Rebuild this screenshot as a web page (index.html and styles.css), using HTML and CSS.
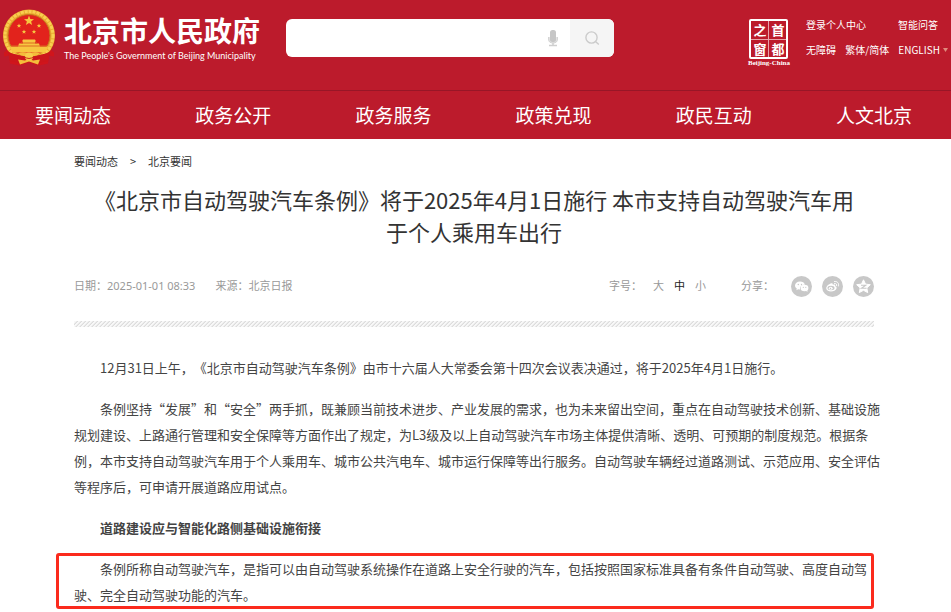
FILE: index.html
```html
<!DOCTYPE html>
<html lang="zh-CN">
<head>
<meta charset="utf-8">
<meta name="viewport" content="width=device-width, initial-scale=1">
<title>北京市人民政府</title>
<link rel="stylesheet" href="styles.css">
</head>
<body>
<header class="header">
  <div class="topbar">
    <a class="brand" href="#">
      <svg class="emblem" viewBox="0 0 54 56" aria-hidden="true">
        <path d="M8 38 L2 43 L2 47 L7 46 L8 54 L17 56 L27 53 L37 56 L46 54 L47 46 L52 47 L52 43 L46 38Z" fill="#d0151c"/>
        <circle cx="27" cy="26" r="26" fill="#eaa930"/>
        <circle cx="27" cy="26" r="24" fill="none" stroke="#f8cf50" stroke-width="3" stroke-dasharray="3 1"/>
        <circle cx="27" cy="26" r="21" fill="#e2231c" stroke="#c5791f"/>
        <g fill="#f7c640">
          <path d="M27 6l1.300 3.500 3.700.200-2.900 2.300 1 3.600-3.100-2-3.100 2 1-3.600-2.900-2.300 3.700-.200z"/>
          <path d="M17 14l.6 1.500 1.600.1-1.200 1 .4 1.600-1.400-.9-1.400.9.4-1.600-1.200-1 1.600-.1z"/>
          <path d="M37 14l.6 1.500 1.600.1-1.200 1 .4 1.600-1.400-.9-1.400.9.4-1.600-1.200-1 1.600-.1z"/>
          <path d="M22 20l.6 1.500 1.600.1-1.200 1 .4 1.600-1.400-.9-1.400.9.4-1.600-1.200-1 1.600-.1z"/>
          <path d="M32 20l.6 1.500 1.600.1-1.200 1 .4 1.600-1.400-.9-1.400.9.4-1.600-1.200-1 1.600-.1z"/>
          <path d="M21 30h12l1 2h-1v2h4l1 3h8q-1 4-3 6H11q-2-2-3-6h8l1-3h4v-2h-1z"/>
        </g>
        <path d="M9 36.500h36M19 33.500h16" stroke="#dd6b22" stroke-width="1"/>
        <path d="M6 42c7 4 13 3 21 6 8-3 14-2 21-6l-2 10c-5 0-9 1-11 3-3 0-5-2-8-3-3 1-5 3-8 3-2-2-6-3-11-3z" fill="#cc161b"/>
        <path d="M16 44q6-3 11 1 5-4 11-1-4 4-11 2-7 2-11-2zM16 50l7 1 4-2 4 2 7-1-2 5-9-3-9 3z" fill="#f4bd3b"/>
        <circle cx="27" cy="47" r="4" fill="#f8cd4c"/><path d="M22 47q5 4 10 0" fill="none" stroke="#cc3018"/>
      </svg>
      <span class="brand-text">
        <span class="brand-cn">北京市人民政府</span>
        <span class="brand-en">The People's Government of Beijing Municipality</span>
      </span>
    </a>
    <form class="search" role="search">
      <input class="search-input" type="text" aria-label="搜索">
      <button class="mic" type="button" aria-label="语音">
        <svg width="12" height="18" viewBox="0 0 12 18" aria-hidden="true"><path d="M1.500 8v2q0 4 4.500 4t4.500-4V8" fill="#e2e2e2" stroke="#d4d4d4"/><rect x="3" y="1" width="6" height="12" rx="2.500" fill="#c6c6c6"/><path d="M6 14v2M2 16.500h8" fill="none" stroke="#cfcfcf" stroke-width="1.500"/></svg>
      </button>
      <button class="search-btn" type="button" aria-label="搜索">
        <svg width="16" height="16" viewBox="0 0 16 16" fill="none" stroke="#cbcbcb" stroke-width="1.400" aria-hidden="true"><circle cx="7.500" cy="7.500" r="5.600"/><path d="M11.500 11.500l3.300 3"/></svg>
      </button>
    </form>
    <div class="tools">
      <a class="capital" href="#">
        <span class="seal"><span>之</span><span>首</span><span>窗</span><span>都</span></span>
        <span class="capital-en">Beijing-China</span>
      </a>
      <div class="links">
        <div class="links-row"><a href="#">登录个人中心</a><a class="faq" href="#">智能问答</a></div>
        <div class="links-row"><a href="#">无障碍</a><a href="#">繁体/简体</a><a class="lang" href="#">ENGLISH<svg width="5" height="4" viewBox="0 0 5 4" aria-hidden="true"><path d="M0 0h5L2.500 4z" fill="#e08a7c"/></svg></a></div>
      </div>
    </div>
  </div>
  <nav class="nav">
    <a href="#">要闻动态</a><a href="#">政务公开</a><a href="#">政务服务</a><a href="#">政策兑现</a><a href="#">政民互动</a><a href="#">人文北京</a>
  </nav>
</header>
<main class="page">
  <nav class="crumbs"><a href="#">要闻动态</a><span>&gt;</span><a href="#">北京要闻</a></nav>
  <h1 class="title">《北京市自动驾驶汽车条例》将于2025年4月1日施行 本市支持自动驾驶汽车用于个人乘用车出行</h1>
  <div class="meta">
    <span>日期：2025-01-01 08:33</span>
    <span class="source">来源：北京日报</span>
    <div class="sizes"><span>字号：</span><button type="button">大</button><button class="on" type="button">中</button><button type="button">小</button></div>
    <div class="share">
      <span>分享：</span>
      <a href="#" aria-label="微信"><svg viewBox="0 0 21 21" aria-hidden="true"><circle cx="10.500" cy="10.500" r="10.500" fill="#c8c8c8"/><path d="M9 5.500c-3 0-5 1.800-5 4 0 1.300.7 2.300 1.800 3l-.5 1.700 2-1c.6.200 1.200.200 1.800.200-.5-3 1.600-4.700 4.800-4.700C13.400 6.700 11.500 5.500 9 5.500z" fill="#fff"/><ellipse cx="13.500" cy="12" rx="3.900" ry="3.200" fill="#fff"/><path d="M14.500 14.500l2 1.500-.4-2z" fill="#fff"/><g fill="#c8c8c8"><circle cx="7.300" cy="8.500" r=".7"/><circle cx="10.500" cy="8.500" r=".7"/><circle cx="12.300" cy="11.300" r=".6"/><circle cx="14.800" cy="11.300" r=".6"/></g></svg></a>
      <a href="#" aria-label="微博"><svg viewBox="0 0 21 21" aria-hidden="true"><circle cx="10.500" cy="10.500" r="10.500" fill="#c8c8c8"/><path d="M9.500 7.200c1.200-.3 1.600.5 1.200 1.600 1.900-.6 3 0 2.500 1.500 1.200.4 1.600 1.100 1.300 2.100-.6 2-3 3-5.500 3-2.700 0-4.800-1.200-4.800-3.100 0-2.200 3-4.700 5.300-5.100z" fill="#fff"/><ellipse cx="9" cy="12" rx="3.500" ry="2.200" fill="#c8c8c8"/><ellipse cx="8.700" cy="12.200" rx="1.900" ry="1.500" fill="#fff"/><circle cx="8.500" cy="12.500" r=".7" fill="#c8c8c8"/><path d="M12.500 5.500c2.900-.4 4.700 1.700 4 4.500M12.500 7.500c1.700-.2 2.500.8 2.200 2.200" fill="none" stroke="#fff" stroke-linecap="round"/></svg></a>
      <a href="#" aria-label="QQ空间"><svg viewBox="0 0 21 21" aria-hidden="true"><circle cx="10.500" cy="10.500" r="10.500" fill="#c8c8c8"/><path d="M10.500 3.800l2 4.300 4.800.6-3.500 3.200.9 4.700-4.200-2.300-4.200 2.300.9-4.700-3.500-3.200 4.800-.6z" fill="#fff" stroke="#fff" stroke-linejoin="round" stroke-width="1"/><path d="M8 9.200h4.700L8.500 12.300h5" fill="none" stroke="#c8c8c8" stroke-width="1.100"/></svg></a>
    </div>
  </div>
  <div class="stripe"></div>
  <article class="article">
    <p>12月31日上午，《北京市自动驾驶汽车条例》由市十六届人大常委会第十四次会议表决通过，将于2025年4月1日施行。</p>
    <p>条例坚持“发展”和“安全”两手抓，既兼顾当前技术进步、产业发展的需求，也为未来留出空间，重点在自动驾驶技术创新、基础设施规划建设、上路通行管理和安全保障等方面作出了规定，为L3级及以上自动驾驶汽车市场主体提供清晰、透明、可预期的制度规范。根据条例，本市支持自动驾驶汽车用于个人乘用车、城市公共汽电车、城市运行保障等出行服务。自动驾驶车辆经过道路测试、示范应用、安全评估等程序后，可申请开展道路应用试点。</p>
    <p><strong>道路建设应与智能化路侧基础设施衔接</strong></p>
    <p class="marked">条例所称自动驾驶汽车，是指可以由自动驾驶系统操作在道路上安全行驶的汽车，包括按照国家标准具备有条件自动驾驶、高度自动驾驶、完全自动驾驶功能的汽车。</p>
  </article>
</main>
</body>
</html>
```
FILE: styles.css
```css
* { box-sizing: border-box; }

body {
  margin: 0;
  background: #fff;
  color: #333;
  font-family: "Noto Sans CJK SC", "Noto Sans", sans-serif;
  font-size: 11px;
  line-height: 16px;
  text-spacing-trim: space-all;
}

a { color: inherit; text-decoration: none; }

button {
  padding: 0;
  border: 0;
  background: none;
  color: inherit;
  font: inherit;
}

svg { display: block; }

/* Header */
.header { background: #bc1b2c; color: #fff; }

.topbar {
  display: flex;
  align-items: flex-start;
  height: 90px;
  padding: 9px 3px 0 2px;
}

.brand { display: flex; gap: 8px; width: 284px; flex: none; }
.emblem { width: 54px; height: 57px; }
.brand-text { display: flex; flex-direction: column; padding-top: 4px; white-space: nowrap; }
.brand-cn { font-size: 28px; font-weight: 700; line-height: 34px; }
.brand-en { font-family: Lato, "Open Sans", sans-serif; font-size: 9px; line-height: 18px; }

.search {
  display: flex;
  align-items: center;
  width: 328px;
  height: 38px;
  margin-top: 10px;
  overflow: hidden;
  background: #fff;
  border-radius: 6px;
}
.search-input { flex: 1; min-width: 0; height: 100%; border: 0; outline: 0; padding: 0 12px; background: none; }
.mic { margin-right: 11px; }
.search-btn { display: grid; place-items: center; width: 44px; height: 100%; background: #f5f5f5; }

.tools { display: flex; gap: 16px; margin-left: auto; padding-top: 8px; white-space: nowrap; }
.capital { display: flex; flex-direction: column; align-items: center; padding-top: 2px; }
.seal {
  display: grid;
  grid-template-columns: 17px 17px;
  gap: 2px 1px;
  border: 2px solid #fff;
  border-radius: 2px;
  background: linear-gradient(#e9a3aa, #e9a3aa) center / 1px 100% no-repeat, linear-gradient(#e9a3aa, #e9a3aa) center / 100% 1px no-repeat;
  font-size: 13px;
  font-weight: 700;
  line-height: 17px;
  text-align: center;
}
.capital-en { font-family: "Liberation Serif", serif; font-size: 7px; font-weight: 700; line-height: 8px; }

.links { display: flex; flex-direction: column; gap: 9px; width: 142px; font-size: 10px; }
.links-row { display: flex; justify-content: space-between; }
.faq { padding-right: 10px; }
.lang { display: flex; align-items: center; gap: 3px; }

.nav {
  display: flex;
  justify-content: space-between;
  padding: 0 39px 0 35px;
  border-top: 1px solid #981627;
  font-size: 19px;
  line-height: 48px;
}

/* Article page */
.page { max-width: 803px; margin: 0 auto; padding: 14px 3px 4px 0; }
.crumbs { display: flex; gap: 12px; }

.title {
  margin: 14px 0 0;
  padding: 0 10px;
  font-size: 22px;
  font-weight: 400;
  line-height: 32px;
  text-align: center;
}

.meta {
  display: flex;
  align-items: center;
  height: 22px;
  margin-top: 28px;
  color: #999;
  font-family: "Noto Sans", "Noto Sans CJK SC", sans-serif;
}
.source { margin-left: 20px; }
.sizes { display: flex; gap: 10px; margin-left: auto; }
.sizes span { margin-right: 1px; }
.sizes .on { color: #222; }
.share { display: flex; align-items: center; gap: 10px; margin-left: 35px; }
.share span { margin-right: 7px; }
.share svg { width: 21px; height: 21px; }

.stripe {
  height: 6px;
  margin-top: 24px;
  background: linear-gradient(135deg, #f8f8f8 37%, #ddd 38% 50%, #f8f8f8 51% 87%, #ddd 88%) 0 0 / 4px 4px;
}

.article { margin: 28px -8px 0 0; color: #444; font-size: 13px; line-height: 26px; }
.article p { margin: 0 0 15px; text-indent: 2em; }

/* Frame drawn over the quoted definition */
.article .marked { position: relative; margin: 0 8px 0 0; }
.marked::after {
  content: "";
  position: absolute;
  inset: -3px 0 -1px -18px;
  border: 3px solid #fb2a1d;
  border-radius: 3px;
  pointer-events: none;
}
```
